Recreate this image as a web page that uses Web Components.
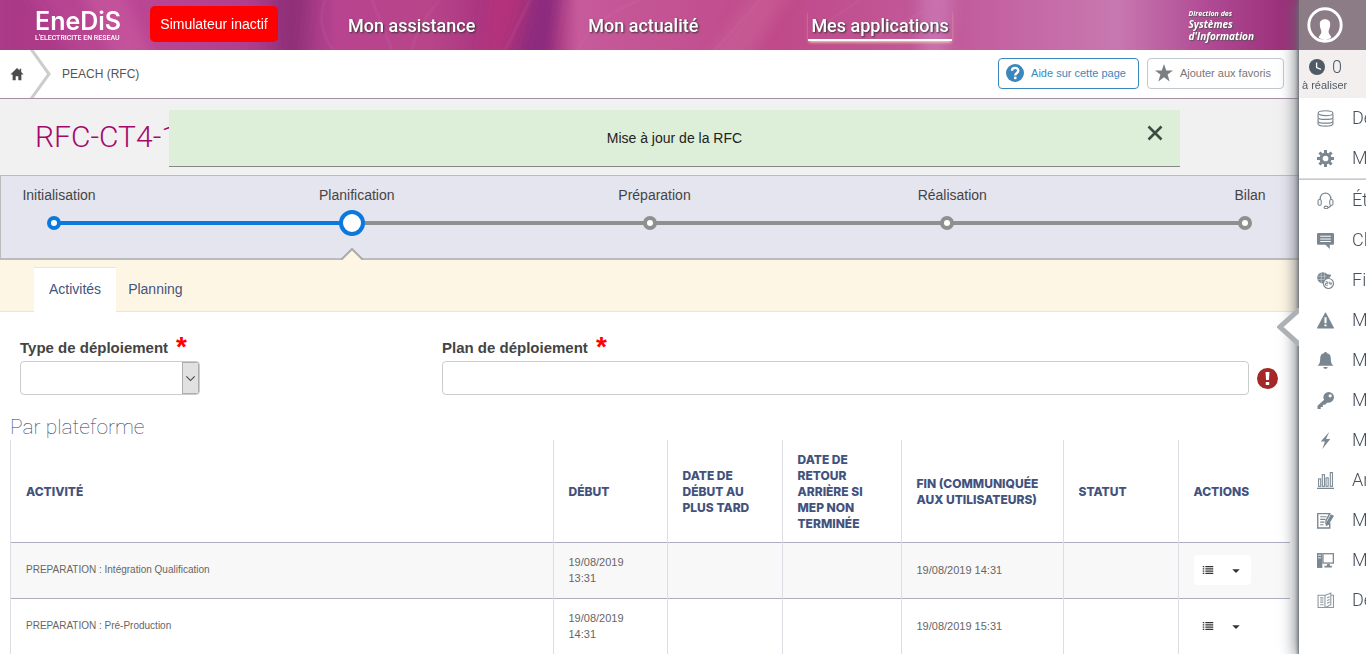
<!DOCTYPE html>
<html lang="fr">
<head>
<meta charset="utf-8">
<title>PEACH (RFC)</title>
<style>
  body { margin: 0; font-family: "Liberation Sans", Arial, sans-serif; font-size: 14px; color: #444; background: #fff; }
</style>
</head>
<body>
<peach-app></peach-app>

<script>
const define = (name, html, setup) => {
  const template = document.createElement('template');
  template.innerHTML = html;
  customElements.define(name, class extends HTMLElement {
    constructor() {
      super();
      this.attachShadow({ mode: 'open' }).append(template.content.cloneNode(true));
    }
    connectedCallback() { if (setup) setup(this, this.shadowRoot); }
  });
};

/* ---------- icons ---------- */
const ICONS = {
  home: '<path d="M8 1 L0.500 8.500 H3 V15 H6.500 V10.500 H9.500 V15 H13 V8.500 H15.500 L12.800 5.800 V2 H11 V4 Z" fill="#4c4c4c"/>',
  help: '<circle cx="8" cy="8" r="8" fill="#3a87bd"/><path d="M5.300 6.100 C5.300 2.600 10.900 2.600 10.900 6 C10.900 8 8.200 8 8.200 10.200" fill="none" stroke="#fff" stroke-width="2.100"/><rect x="7.100" y="11.300" width="2.200" height="2.200" fill="#fff"/>',
  star: '<path d="M8 0 L10 5.800 H16 L11.200 9.400 L13 15.500 L8 11.800 L3 15.500 L4.800 9.400 L0 5.800 H6 Z" fill="#7b7f83"/>',
  alert: '<circle cx="8" cy="8" r="8" fill="#a52828"/><path d="M6.500 3 H9.500 L9.100 9.200 H6.900 Z M6.700 10.600 H9.300 V13 H6.700 Z" fill="#fff"/>',
  clock: '<circle cx="8" cy="8" r="8" fill="#4f5b66"/><path d="M7.600 3.500 V8.600 L12 10.300" fill="none" stroke="#fff" stroke-width="1.300"/>',
  close: '<path d="M1.500 1.500 L14.500 14.500 M14.500 1.500 L1.500 14.500" stroke="#3f4a42" stroke-width="2.600"/>',
  list: '<path d="M1 3.500 H3 M1 6.500 H3 M1 9.500 H3 M1 12.500 H3" stroke="#333" stroke-width="1.800"/><path d="M4.500 3.500 H15 M4.500 6.500 H15 M4.500 9.500 H15 M4.500 12.500 H15" stroke="#333" stroke-width="1.600"/>',
  caret: '<path d="M3 7 H13 L8 12 Z" fill="#333"/>',
  chevron: '<path d="M2 5 L8 11 L14 5" fill="none" stroke="#444" stroke-width="1.600"/>',
  database: '<g fill="#fff" stroke="#7d8891" stroke-width="1.100"><path d="M1 11 V13 C1 16 15 16 15 13 V11"/><path d="M1 8 V10.500 C1 13 15 13 15 10.500 V8"/><path d="M1 4 V7 C1 9.500 15 9.500 15 7 V4"/><ellipse cx="8" cy="3" rx="7" ry="2.300"/></g>',
  gear: '<circle cx="8" cy="8" r="4.200" fill="none" stroke="#7a8791" stroke-width="3"/><path d="M8 0 V3 M8 13 V16 M0 8 H3 M13 8 H16 M2.300 2.300 L4.400 4.400 M11.600 11.600 L13.700 13.700 M13.700 2.300 L11.600 4.400 M4.400 11.600 L2.300 13.700" stroke="#7a8791" stroke-width="2.800"/>',
  headset: '<path d="M3 7 C2.500 -1 13.500 -1 13 7 M13 12 C13 14.500 11 14.600 9.500 14.600" fill="none" stroke="#7a8791" stroke-width="1.200"/><rect x="1" y="7" width="3" height="5.500" rx="1.300" fill="#fff" stroke="#7a8791"/><rect x="12" y="7" width="3" height="5.500" rx="1.300" fill="#fff" stroke="#7a8791"/><ellipse cx="8.500" cy="14.500" rx="1.800" ry="1.200" fill="#fff" stroke="#7a8791"/>',
  chat: '<path d="M1 1 H15 Q16 1 16 2 V11 Q16 12 15 12 H12 V16 L8 12 H1 Q0 12 0 11 V2 Q0 1 1 1 Z" fill="#7a8791"/><path d="M3 4 H13 M3 6.500 H13 M3 9 H13" stroke="#fff" stroke-width="1"/>',
  globe: '<circle cx="5.500" cy="5.500" r="5.300" fill="#7a8791"/><path d="M0.500 4 H10 M0.500 7 H10 M4 0.500 V10.500 M7 0.500 V10.500" stroke="#cdd3d7" stroke-width="0.600"/><path d="M9 2 L13.500 2.500 L12 5.500 H9 Z" fill="#7a8791"/><circle cx="10.800" cy="10.800" r="4.700" fill="#fff" stroke="#7a8791" stroke-width="1.100"/><path d="M8 9.300 H10 V10.700 H8 V12.400 H10.300 M11.500 9 V11 H13.700 M13.200 9.500 V12.500" fill="none" stroke="#7a8791" stroke-width="0.900"/>',
  warning: '<path d="M8 1 L15.500 15 H0.500 Z" fill="#7a8791" stroke="#7a8791" stroke-linejoin="round"/><path d="M7 5 H9 V10.500 H7 Z M7 11.800 H9 V13.500 H7 Z" fill="#fff"/>',
  bell: '<path d="M7 0 H9 V1 C12 1.500 13 3.500 13 6 C13 10 14 11.500 15.500 13 H0.500 C2 11.500 3 10 3 6 C3 3.500 4 1.500 7 1 Z M6 14 H10 C10 16.500 6 16.500 6 14 Z" fill="#7a8791"/>',
  key: '<circle cx="11" cy="5" r="5" fill="#7a8791"/><circle cx="12.400" cy="3.600" r="1.500" fill="#fff"/><path d="M8 6 L0.500 13 V16 H3.500 V14 H5.500 V12 H7.500 L11 9 Z" fill="#7a8791"/>',
  bolt: '<path d="M11.500 0 L3.500 9 H7.500 L5 16 L12.500 6.500 H8.500 Z" fill="#7a8791"/>',
  chart: '<path d="M0 15.400 H16" stroke="#7a8791" stroke-width="1.200"/><g fill="#fff" stroke="#7a8791" stroke-width="1"><rect x="1.500" y="6.500" width="2" height="7"/><rect x="5" y="2.500" width="2" height="11"/><rect x="8.500" y="5.500" width="2" height="8"/><rect x="12.500" y="0.500" width="2" height="13"/></g>',
  note: '<path d="M0.700 1.500 H12 L8.500 8 L8.500 11 H12 V15 H0.700 Z" fill="#fff" stroke="#7a8791" stroke-width="1.300"/><path d="M3 4.500 H9 M3 7 H8 M3 9.500 H7 M3 12 H6" stroke="#7a8791" stroke-width="1.100"/><path d="M13 2 L16 3.500 L11 12 L8.300 13.500 L8.600 10.300 Z" fill="#7a8791"/>',
  computer: '<rect x="0" y="1" width="5" height="14" fill="#7a8791"/><path d="M1 3 H4 M1 5.500 H4" stroke="#fff" stroke-width="0.800"/><rect x="5.600" y="1.600" width="9.800" height="8.800" fill="#fff" stroke="#7a8791" stroke-width="1.200"/><path d="M9.500 11 H12 V13 H14 V14.500 H7 V13 H9.500 Z" fill="#7a8791"/>',
  book: '<g fill="#fff" stroke="#8d979e" stroke-width="1"><path d="M1 3 L7.500 3 V14.500 L1 14.500 Z M8 3 L13 1 V12 L8 14.500 M13 3 H15.500 V14.500 H8"/><path d="M3 5.500 H6 M3 7.500 H6 M3 9.500 H6 M3 12 H6 M9.500 5.500 L12 4.500 M9.500 8 L12 7 M9.500 10.500 L12 9.500"/></g>',
  user: '<circle cx="8" cy="8" r="7.200" fill="none" stroke="#fff" stroke-width="1.300"/><path d="M5.700 7.500 C5.500 4.700 10.500 4.700 10.300 7.500 C10.300 9.500 9.600 10 9.600 11.200 C9.600 12 10.800 12.800 10.800 13.600 C9 15 7 15 5.200 13.600 C5.200 12.800 6.400 12 6.400 11.200 C6.400 10 5.700 9.500 5.700 7.500 Z" fill="#fff"/>'
};

define('ui-icon', '<style>:host{display:block;flex:none;width:16px;height:16px}svg{display:block;width:100%;height:100%}</style><svg viewBox="0 0 16 16" aria-hidden="true"></svg>',
  (host, root) => { root.querySelector('svg').innerHTML = ICONS[host.getAttribute('name')]; });

/* ---------- top banner ---------- */
define('top-banner', `
<style>
  :host { display: flex; align-items: center; height: 50px; position: relative; overflow: hidden; color: #fff; padding: 0 45px 0 35px; box-sizing: border-box; }
  .petals { position: absolute; inset: 0; width: 100%; height: 100%; z-index: -1; }
  .logo { width: 115px; color: #fff; text-decoration: none; display: block; }
  .logo b { display: block; font: 600 25px/24px Inter, sans-serif; }
  .logo small { display: block; margin-top: 1px; font: 500 7px/8px Roboto, sans-serif; white-space: nowrap; }
  .sim { background: #f00; color: #fff; border: 0; border-radius: 5px; height: 36px; width: 128px; padding: 0; margin-bottom: 2px; font: 14px "Liberation Sans", sans-serif; white-space: nowrap; }
  nav { display: flex; gap: 107px; margin-left: 67px; }
  nav a { color: #fff; text-decoration: none; font: 500 18px/26px Roboto, sans-serif; text-shadow: 1px 1px 2px #333; padding: 3px 3px 0; border-bottom: 2px solid transparent; white-space: nowrap; }
  nav a.on { border-color: #fff; box-shadow: 0 2px 3px -1px #ffe9a0; }
  .dsi { margin-left: auto; font: italic 700 10px/12px "Open Sans", sans-serif; text-shadow: 1px 1px 1px #555; }
  .dsi small { display: block; font-size: 7px; line-height: 9px; }
</style>
<svg class="petals" viewBox="0 0 1299 50" preserveAspectRatio="none" aria-hidden="true">
  <defs>
    <linearGradient id="g">
      <stop offset="0" stop-color="#b0408e"/><stop offset=".1" stop-color="#bc4894"/><stop offset=".19" stop-color="#b03f8c"/>
      <stop offset=".225" stop-color="#97347e"/><stop offset=".26" stop-color="#b84490"/><stop offset=".33" stop-color="#b8448a"/><stop offset=".38" stop-color="#a83480"/>
      <stop offset=".42" stop-color="#9c2e7a"/><stop offset=".445" stop-color="#c65a9a"/><stop offset=".6" stop-color="#c04a8a"/>
      <stop offset=".74" stop-color="#c25c9c"/><stop offset=".86" stop-color="#c878b0"/><stop offset=".93" stop-color="#b04a94"/><stop offset="1" stop-color="#962c74"/>
    </linearGradient>
    <filter id="b" x="-10%" y="-100%" width="120%" height="300%"><feGaussianBlur stdDeviation="7 4"/></filter>
    <filter id="s" x="-10%" y="-100%" width="120%" height="300%"><feGaussianBlur stdDeviation="1"/></filter>
  </defs>
  <rect width="1299" height="50" fill="url(#g)"/>
  <g filter="url(#b)">
    <path d="M0 -20 H20 L80 70 H0Z" fill="#a43282" opacity=".5"/>
    <path d="M75 -20 H115 L160 70 H120Z" fill="#cc5ca4" opacity=".5"/>
    <path d="M270 -20 H310 L300 70 H280Z" fill="#8c2c76" opacity=".6"/>
    <path d="M490 -20 H530 L500 70 H480Z" fill="#c03478" opacity=".5"/>
    <path d="M540 -20 H562 L546 70 H515Z" fill="#842a80" opacity=".7"/>
    <path d="M760 -20 H800 L740 70 H700Z" fill="#d070a4" opacity=".3"/>
    <path d="M920 -20 H955 L945 70 H920Z" fill="#d08cc8" opacity=".45"/>
  </g>
  <g filter="url(#s)" fill="none" stroke="#dc8cc0" opacity=".35">
    <path d="M325 0 C318 18 322 36 334 50 M372 0 L392 50 M440 0 C425 16 415 34 412 50 M530 0 L505 50 M640 0 C600 16 585 34 578 50 M760 0 L715 50 M860 0 L815 30 M925 10 L870 40"/>
  </g>
</svg>
<a class="logo" href="#"><b>EneDiS</b><small>L'ELECTRICITE EN RESEAU</small></a>
<button class="sim">Simulateur inactif</button>
<nav><a href="#">Mon assistance</a><a href="#">Mon actualité</a><a href="#" class="on">Mes applications</a></nav>
<div class="dsi"><small>Direction des</small>Systèmes<br>d'Information</div>`);

/* ---------- breadcrumb ---------- */
define('crumb-bar', `
<style>
  :host { display: flex; align-items: center; height: 49px; box-sizing: border-box; border-bottom: 1px solid #a58fa3; padding-right: 15px; background: #fff; }
  .home { padding-left: 10px; }
  .home ui-icon { width: 14px; height: 14px; }
  .sep { width: 22px; height: 48px; margin: 0 11px 0 5px; }
  .here { flex: 1; font-size: 12px; color: #555; }
  button { display: flex; align-items: center; gap: 7px; height: 31px; box-sizing: border-box; margin: 0 0 2px 8px; padding: 0 12px 0 7px; border-radius: 4px; background: #fff; border: 1px solid #c2c7cc; color: #777; font: 11px "Liberation Sans", sans-serif; white-space: nowrap; }
  button.help { border-color: #3a87bd; color: #3a87bd; }
  button ui-icon { width: 18px; height: 18px; }
</style>
<a class="home" href="#" aria-label="Accueil"><ui-icon name="home"></ui-icon></a>
<svg class="sep" viewBox="0 0 22 48" aria-hidden="true"><path d="M2 -1 L20 24 L2 49" fill="none" stroke="#ccc" stroke-width="3"/></svg>
<span class="here">PEACH (RFC)</span>
<button class="help"><ui-icon name="help"></ui-icon>Aide sur cette page</button>
<button><ui-icon name="star"></ui-icon>Ajouter aux favoris</button>`);

/* ---------- page title and notification ---------- */
define('page-title', `
<style>
  :host { display: block; position: relative; background: #f1f1f1; height: 76px; box-sizing: border-box; padding: 18px 35px; }
  h1 { margin: 0; font: 300 30px/40px Roboto, sans-serif; color: #a3096b; }
</style>
<h1><slot></slot></h1><slot name="notice"></slot>`);

define('flash-notice', `
<style>
  :host { position: absolute; top: 11px; left: 13%; right: 119px; height: 57px; box-sizing: border-box; background: #ddefd9; border-bottom: 1px solid #888; color: #222; display: grid; place-items: center; }
  button { position: absolute; top: 15px; right: 17px; border: 0; padding: 0; background: none; }
</style>
<span><slot></slot></span><button aria-label="Fermer"><ui-icon name="close"></ui-icon></button>`);

/* ---------- stepper ---------- */
define('step-track', `
<style>
  :host { display: block; height: 85px; box-sizing: border-box; background: #e5e5ef; border: 1px solid #bbb; border-width: 1px 0 2px 1px; padding: 11px 34px 0 33px; }
  ol { list-style: none; margin: 0; padding: 0; display: flex; }
</style>
<ol><slot></slot></ol>`);

define('step-item', `
<style>
  :host { display: block; flex: 1; position: relative; }
  :host(:last-of-type) { flex: none; }
  .box { width: 40px; display: flex; flex-direction: column; align-items: center; }
  span { line-height: 16px; white-space: nowrap; padding-left: 10px; }
  i { position: relative; box-sizing: border-box; width: 14px; height: 14px; border: 4px solid #8f8f8f; border-radius: 50%; background: #fff; margin: 13px 0 6px; }
  :host::before { content: ""; position: absolute; left: 20px; right: -20px; top: 34px; height: 4px; background: #8f8f8f; }
  :host(:last-of-type)::before { display: none; }
  :host([state=done]) i { border-color: #0b78de; }
  :host([state=done])::before { background: #0b78de; }
  :host([state=current]) i { width: 26px; height: 26px; border-color: #0b78de; margin: 7px 0 0; }
  svg { display: none; position: absolute; left: 9px; top: 61px; width: 22px; height: 12px; }
  :host([state=current]) svg { display: block; }
</style>
<div class="box" role="listitem"><span><slot></slot></span><i></i></div>
<svg viewBox="0 0 22 12" aria-hidden="true"><path d="M1 11 L11 1 L21 11 V12 H1Z" fill="#fef6e4"/><path d="M0 12 L11 1 L22 12" fill="none" stroke="#aaa" stroke-width="2"/></svg>`);

/* ---------- tabs ---------- */
define('tab-strip', `
<style>
  :host { display: flex; align-items: flex-end; height: 52px; box-sizing: border-box; background: #fef6e4; border-bottom: 1px solid #e9e5da; padding-left: 34px; }
  button { height: 45px; box-sizing: border-box; margin-bottom: -1px; border: 0; background: none; color: #45537f; font: 14px "Liberation Sans", sans-serif; padding: 0 12px 2px; }
  button.on { background: #fff; border-top: 1px solid #e9e5da; padding: 0 15px 2px; }
</style>
<button class="on">Activités</button><button>Planning</button>`);

/* ---------- form ---------- */
define('deploy-form', `
<style>
  :host { display: grid; grid-template-columns: 1fr 2fr; gap: 4px; padding: 22px 21px 0 20px; }
  label { display: flex; align-items: center; gap: 8px; height: 26px; margin-bottom: 1px; font-weight: 700; font-size: 15px; }
  label b { color: #f00; font-size: 28px; line-height: 20px; height: 20px; }
  .pick { display: grid; grid-template-columns: 1fr 17px; width: 180px; height: 34px; box-sizing: border-box; border: 1px solid #ccc; border-radius: 4px; overflow: hidden; }
  select { grid-area: 1 / 1 / 2 / 3; appearance: none; border: 0; background: none; padding: 0 24px 0 8px; font: 14px "Liberation Sans", sans-serif; }
  .arrow { grid-area: 1 / 2; display: grid; place-items: center; background: #e1e1e1; border: 1px solid #adadad; pointer-events: none; }
  .arrow ui-icon { width: 11px; height: 11px; }
  .line { display: flex; align-items: center; gap: 8px; }
  input { flex: 1; min-width: 0; height: 34px; box-sizing: border-box; border: 1px solid #ccc; border-radius: 4px; padding: 0 8px; font: 14px "Liberation Sans", sans-serif; }
  .line ui-icon { width: 21px; height: 21px; }
</style>
<div><label for="type">Type de déploiement <b>*</b></label>
  <div class="pick"><select id="type"><option></option></select><span class="arrow"><ui-icon name="chevron"></ui-icon></span></div></div>
<div><label for="plan">Plan de déploiement <b>*</b></label>
  <div class="line"><input id="plan" type="text"><ui-icon name="alert"></ui-icon></div></div>`);

/* ---------- activities table ---------- */
define('row-actions', `
<style>
  :host { display: inline-flex; width: 57px; height: 30px; background: #fff; border-radius: 4px; vertical-align: middle; }
  button { flex: 1; display: grid; place-items: center; border: 0; padding: 0; background: none; }
  ui-icon { width: 12px; height: 12px; }
</style>
<button aria-label="Détail"><ui-icon name="list"></ui-icon></button><button aria-label="Menu"><ui-icon name="caret"></ui-icon></button>`);

define('activity-table', `
<style>
  :host { display: block; padding: 19px 9px 0 10px; }
  h2 { margin: 0; font: 100 21px/26px Roboto, sans-serif; color: #2e3b66; }
  table { width: 100%; table-layout: fixed; border-collapse: collapse; font-size: 11px; line-height: 16px; }
  th, td { box-sizing: border-box; text-align: left; padding: 0 15px; border-left: 1px solid #dddde4; }
  th { height: 102px; padding-top: 2px; font: 800 12px/16px Inter, sans-serif; color: #43527d; text-transform: uppercase; }
  td { height: 56px; color: #666; }
  td:first-child { font-size: 10px; }
  tr { border-bottom: 1px solid #adadc0; }
  tbody tr:nth-child(odd) { background: #f8f8f8; }
  .w114 { width: 114px; } .w115 { width: 115px; } .w119 { width: 119px; } .w162 { width: 162px; } .w112 { width: 112px; }
</style>
<h2>Par plateforme</h2>
<table>
  <colgroup><col><col class="w114"><col class="w115"><col class="w119"><col class="w162"><col class="w115"><col class="w112"></colgroup>
  <thead><tr><th>Activité</th><th>Début</th><th>Date de début au plus tard</th><th>Date de retour arrière si MEP non terminée</th><th>Fin (communiquée aux utilisateurs)</th><th>Statut</th><th>Actions</th></tr></thead>
  <tbody>
    <tr><td>PREPARATION : Intégration Qualification</td><td>19/08/2019 13:31</td><td></td><td></td><td>19/08/2019 14:31</td><td></td><td><row-actions></row-actions></td></tr>
    <tr><td>PREPARATION : Pré-Production</td><td>19/08/2019 14:31</td><td></td><td></td><td>19/08/2019 15:31</td><td></td><td><row-actions></row-actions></td></tr>
  </tbody>
</table>`);

/* ---------- side panel ---------- */
define('side-link', `
<style>
  :host { display: block; }
  a { display: flex; align-items: center; height: 40px; gap: 18px; padding-left: 18px; color: #44505c; text-decoration: none; font: 300 18px/24px Roboto, sans-serif; white-space: nowrap; }
  ui-icon { width: 17px; height: 17px; }
</style>
<a href="#"><span><slot></slot></span></a>`,
  (host, root) => {
    const icon = document.createElement('ui-icon');
    icon.setAttribute('name', host.getAttribute('icon'));
    root.querySelector('a').prepend(icon);
  });

define('side-panel', `
<style>
  :host { display: block; position: relative; background: #fff; box-shadow: 0 0 3px 1px #666a70, 0 0 16px 2px #6a6e74; }
  .clip { overflow: hidden; height: 100%; }
  .user { display: block; width: 100%; height: 50px; border: 0; background: #8b7c85; padding: 0 0 0 8px; }
  .user ui-icon { width: 36px; height: 36px; }
  .todo { height: 48px; box-sizing: border-box; background: #f3efef; padding: 6px 3px 0; color: #4f5b66; font-size: 11px; white-space: nowrap; }
  .todo div { display: flex; align-items: center; gap: 7px; margin-bottom: 1px; padding-left: 7px; font: 300 18px/22px Roboto, sans-serif; }
  hr { height: 2px; margin: 0; border: 0; background: #ddd; border-bottom: 1px solid #c8c8c8; box-sizing: border-box; }
  .handle { position: absolute; left: -22px; top: 308px; width: 22px; height: 38px; border: 0; padding: 0; background: none; }
  .handle svg { display: block; }
</style>
<div class="clip">
  <button class="user" aria-label="Profil"><ui-icon name="user"></ui-icon></button>
  <div class="todo"><div><ui-icon name="clock"></ui-icon>0</div>à réaliser</div>
  <slot name="top"></slot><hr><slot></slot>
</div>
<button class="handle" aria-label="Ouvrir"><svg width="22" height="38" viewBox="0 0 22 38" aria-hidden="true"><path d="M22 2 L3 19 L22 36 Z" fill="#fff"/><path d="M23 1 L3 19 L23 37" fill="none" stroke="#adb1b4" stroke-width="5"/></svg></button>`);

/* ---------- page ---------- */
define('peach-app', `
<style>
  :host { display: grid; grid-template-columns: minmax(0, 1fr) 67px; min-height: 100vh; overflow: hidden; }
  main { min-width: 0; position: relative; z-index: 0; }
  side-panel { z-index: 1; }
</style>
<main>
  <top-banner></top-banner>
  <crumb-bar></crumb-bar>
  <page-title>RFC-CT4-1<flash-notice slot="notice">Mise à jour de la RFC</flash-notice></page-title>
  <step-track>
    <step-item state="done">Initialisation</step-item>
    <step-item state="current">Planification</step-item>
    <step-item>Préparation</step-item>
    <step-item>Réalisation</step-item>
    <step-item>Bilan</step-item>
  </step-track>
  <tab-strip></tab-strip>
  <deploy-form></deploy-form>
  <activity-table></activity-table>
</main>
<side-panel>
  <side-link slot="top" icon="database">De</side-link>
  <side-link slot="top" icon="gear">M</side-link>
  <side-link icon="headset">Ét</side-link>
  <side-link icon="chat">Cl</side-link>
  <side-link icon="globe">Fi</side-link>
  <side-link icon="warning">M</side-link>
  <side-link icon="bell">M</side-link>
  <side-link icon="key">M</side-link>
  <side-link icon="bolt">M</side-link>
  <side-link icon="chart">An</side-link>
  <side-link icon="note">M</side-link>
  <side-link icon="computer">M</side-link>
  <side-link icon="book">De</side-link>
</side-panel>`);
</script>
</body>
</html>
